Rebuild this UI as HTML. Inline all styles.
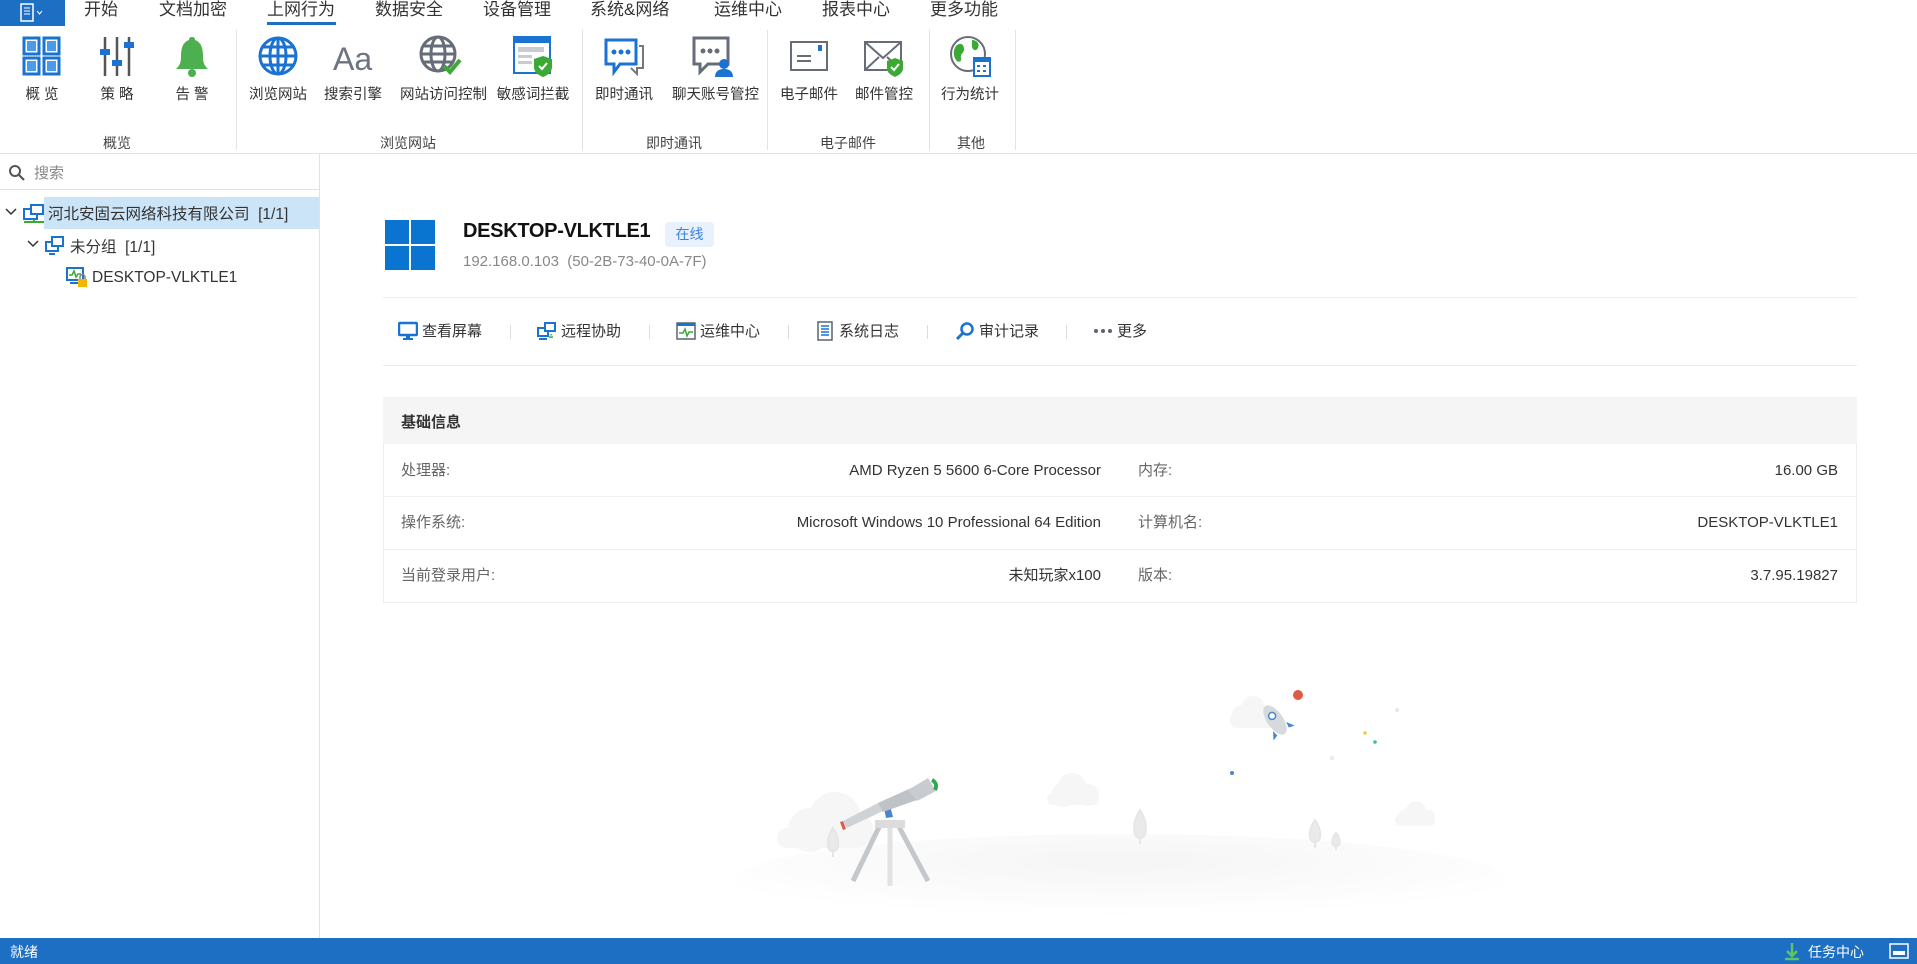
<!DOCTYPE html>
<html><head><meta charset="utf-8"><style>
*{margin:0;padding:0;box-sizing:border-box}
body{width:1917px;height:964px;overflow:hidden;background:#fff;font-family:"Liberation Sans","Noto Sans CJK SC",sans-serif;color:#333;position:relative}
.a{position:absolute}
.tab{position:absolute;top:0;height:26px;line-height:20px;font-size:17px;color:#333}
.ri{position:absolute;top:34px;width:80px;margin-left:-40px;text-align:center}
.ri svg{display:block;margin:0 auto;width:44px;height:44px}
.ri span{display:block;font-size:14.5px;color:#333;margin-top:5px;white-space:nowrap}
.gl{position:absolute;top:133px;font-size:14px;color:#444;transform:translateX(-50%)}
.sep{position:absolute;top:30px;width:1px;height:120px;background:#e3e3e3}
.act{position:absolute;top:320px;font-size:15px;color:#333;display:flex;align-items:center;gap:4px;white-space:nowrap}
.act svg{width:20px;height:20px}
.vs{position:absolute;top:325px;width:1px;height:14px;background:#ddd}
.lb{position:absolute;font-size:15px;line-height:20px;height:20px;color:#666}
.vl{position:absolute;font-size:15px;line-height:20px;height:20px;color:#333;text-align:right}
</style></head><body>
<div class="a" style="left:0;top:0;width:65px;height:26px;background:#1c6fc2"></div>
<svg class="a" style="left:20px;top:3px" width="26" height="20" viewBox="0 0 26 20"><rect x="1" y="1" width="12" height="17" fill="none" stroke="#fff" stroke-width="1.5"/><line x1="4" y1="5" x2="10" y2="5" stroke="#fff"/><line x1="4" y1="8" x2="10" y2="8" stroke="#fff"/><line x1="4" y1="11" x2="10" y2="11" stroke="#fff"/><path d="M17 8l2.5 3 2.5-3" stroke="#fff" fill="none"/></svg>
<div class="tab" style="left:84px">开始</div>
<div class="tab" style="left:159px">文档加密</div>
<div class="tab" style="left:267px">上网行为</div>
<div class="a" style="left:267px;top:22px;width:69px;height:3px;background:#1c6fc2"></div>
<div class="tab" style="left:375px">数据安全</div>
<div class="tab" style="left:483px">设备管理</div>
<div class="tab" style="left:590px">系统&amp;网络</div>
<div class="tab" style="left:714px">运维中心</div>
<div class="tab" style="left:822px">报表中心</div>
<div class="tab" style="left:930px">更多功能</div>

<div class="ri" style="left:42px"><svg viewBox="0 0 44 44"><g fill="#fff" stroke="#1a73d0" stroke-width="3"><rect x="4" y="4" width="15" height="16"/><rect x="24" y="4" width="15" height="16"/><rect x="4" y="24" width="15" height="16"/><rect x="24" y="24" width="15" height="16"/></g><g fill="#4a9be8"><rect x="7" y="7" width="9" height="10"/><rect x="27" y="7" width="9" height="10"/><rect x="7" y="27" width="9" height="10"/><rect x="27" y="27" width="9" height="10"/></g></svg><span>概 览</span></div>
<div class="ri" style="left:117px"><svg viewBox="0 0 44 44"><g stroke="#555" stroke-width="2.5"><line x1="10" y1="3" x2="10" y2="42"/><line x1="22" y1="3" x2="22" y2="42"/><line x1="34" y1="3" x2="34" y2="42"/></g><g fill="#1a73d0"><rect x="5" y="15" width="10" height="6"/><rect x="17" y="26" width="10" height="6"/><rect x="29" y="8" width="10" height="6"/></g></svg><span>策 略</span></div>
<div class="ri" style="left:192px"><svg viewBox="0 0 44 44"><path d="M22 3c2 0 3 1 3 3c6 2 8 8 8 16c0 8 2 10 5 13H6c3-3 5-5 5-13c0-8 2-14 8-16c0-2 1-3 3-3z" fill="#4caf50"/><circle cx="22" cy="39" r="4" fill="#4caf50"/></svg><span>告 警</span></div>
<div class="ri" style="left:278px"><svg viewBox="0 0 44 44"><g fill="none" stroke="#1a73d0" stroke-width="3"><circle cx="22" cy="22" r="18"/><ellipse cx="22" cy="22" rx="8" ry="18"/><line x1="4" y1="22" x2="40" y2="22"/><line x1="22" y1="4" x2="22" y2="40"/><path d="M7 13h30M7 31h30"/></g></svg><span>浏览网站</span></div>
<div class="ri" style="left:353px"><svg viewBox="0 0 44 44"><text x="2" y="36" font-size="32" fill="#6c7480" font-family="Liberation Sans">Aa</text></svg><span>搜索引擎</span></div>
<div class="ri" style="left:440px"><svg viewBox="0 0 44 44"><g fill="none" stroke="#666d78" stroke-width="3"><circle cx="20" cy="20" r="17"/><ellipse cx="20" cy="20" rx="7" ry="17"/><line x1="3" y1="20" x2="37" y2="20"/><path d="M6 12h28M6 28h28"/></g><path d="M26 32l6 6 10-12" stroke="#3aaa35" stroke-width="4" fill="none"/></svg><span>网站访问控制</span></div>
<div class="ri" style="left:533px"><svg viewBox="0 0 44 44"><rect x="3" y="3" width="36" height="36" fill="#fff" stroke="#1a73d0" stroke-width="2"/><rect x="3" y="3" width="36" height="6" fill="#1a73d0"/><g fill="#c8ccd2"><rect x="7" y="13" width="26" height="5"/><rect x="7" y="21" width="14" height="3"/><rect x="7" y="27" width="14" height="3"/></g><path d="M32 22l9 3v8c0 5-4 8-9 10c-5-2-9-5-9-10v-8z" fill="#3aaa35"/><path d="M28 32l3 3 5-6" stroke="#fff" stroke-width="2" fill="none"/></svg><span>敏感词拦截</span></div>
<div class="ri" style="left:624px"><svg viewBox="0 0 44 44"><path d="M4 6h30v24H18l-6 8v-8H4z" fill="#fff" stroke="#1a73d0" stroke-width="3"/><path d="M37 12h4v22h-6v6l-6-6" fill="none" stroke="#777" stroke-width="2"/><g fill="#1a73d0"><circle cx="12" cy="18" r="2.5"/><circle cx="19" cy="18" r="2.5"/><circle cx="26" cy="18" r="2.5"/></g></svg><span>即时通讯</span></div>
<div class="ri" style="left:712px"><svg viewBox="0 0 44 44"><path d="M4 4h34v26H18l-8 8v-8H4z" fill="#fff" stroke="#666d78" stroke-width="3"/><g fill="#666d78"><circle cx="13" cy="17" r="2.5"/><circle cx="20" cy="17" r="2.5"/><circle cx="27" cy="17" r="2.5"/></g><circle cx="34" cy="30" r="5" fill="#1a73d0"/><path d="M25 43c0-6 4-8 9-8s9 2 9 8z" fill="#1a73d0"/></svg><span>聊天账号管控</span></div>
<div class="ri" style="left:809px"><svg viewBox="0 0 44 44"><rect x="4" y="8" width="36" height="28" fill="#fff" stroke="#666d78" stroke-width="2"/><line x1="10" y1="22" x2="24" y2="22" stroke="#666d78" stroke-width="2"/><line x1="10" y1="27" x2="24" y2="27" stroke="#666d78" stroke-width="2"/><rect x="31" y="11" width="4" height="6" fill="#1a73d0"/></svg><span>电子邮件</span></div>
<div class="ri" style="left:884px"><svg viewBox="0 0 44 44"><rect x="3" y="8" width="36" height="28" fill="#fff" stroke="#666d78" stroke-width="2"/><path d="M3 8l18 16 18-16M3 36l14-13M39 36l-14-13" fill="none" stroke="#666d78" stroke-width="2"/><path d="M33 24l8 3v7c0 5-4 7-8 9c-4-2-8-4-8-9v-7z" fill="#3aaa35"/><path d="M29 33l3 3 5-6" stroke="#fff" stroke-width="2" fill="none"/></svg><span>邮件管控</span></div>
<div class="ri" style="left:970px"><svg viewBox="0 0 44 44"><circle cx="20" cy="20" r="17" fill="#fff" stroke="#666d78" stroke-width="2"/><path d="M8 12c4-4 8-2 8 3s-4 4-3 9c1 4-3 5-5 2c-3-4-3-10 0-14zM24 6c5 0 8 4 6 8s-6 2-6-2z" fill="#3aaa35"/><rect x="26" y="24" width="16" height="18" fill="#fff" stroke="#1a73d0" stroke-width="2"/><rect x="26" y="24" width="16" height="4" fill="#1a73d0"/><g fill="#1a73d0"><rect x="29" y="31" width="3" height="2"/><rect x="35" y="31" width="3" height="2"/><rect x="29" y="36" width="3" height="2"/><rect x="35" y="36" width="3" height="2"/></g></svg><span>行为统计</span></div>
<div class="sep" style="left:236px"></div><div class="sep" style="left:582px"></div><div class="sep" style="left:767px"></div><div class="sep" style="left:929px"></div><div class="sep" style="left:1015px"></div>
<div class="gl" style="left:117px">概览</div>
<div class="gl" style="left:408px">浏览网站</div>
<div class="gl" style="left:674px">即时通讯</div>
<div class="gl" style="left:848px">电子邮件</div>
<div class="gl" style="left:971px">其他</div>
<div class="a" style="left:0;top:153px;width:1917px;height:1px;background:#e2e2e2"></div>

<div class="a" style="left:319px;top:154px;width:1px;height:784px;background:#e2e2e2"></div>
<svg class="a" style="left:8px;top:164px" width="18" height="18" viewBox="0 0 18 18"><circle cx="7" cy="7" r="5" fill="none" stroke="#555" stroke-width="2"/><line x1="11" y1="11" x2="16" y2="16" stroke="#555" stroke-width="2.2"/></svg>
<div class="a" style="left:34px;top:162px;font-size:15px;color:#888">搜索</div>
<div class="a" style="left:0;top:189px;width:319px;height:1px;background:#e2e2e2"></div>
<div class="a" style="left:44px;top:197px;width:275px;height:32px;background:#cce4f7"></div>
<svg class="a" style="left:5px;top:207px" width="12" height="10"><path d="M1 2l5 5 5-5" stroke="#333" stroke-width="1.5" fill="none"/></svg>
<svg class="a" style="left:22px;top:203px" width="24" height="22" viewBox="0 0 24 22"><rect x="2" y="6" width="13" height="10" fill="#fff" stroke="#1a73d0" stroke-width="2"/><rect x="9" y="2" width="12" height="9" fill="#fff" stroke="#1a73d0" stroke-width="2"/><path d="M2 19h20M12 16v3" stroke="#3aaa35" stroke-width="2"/></svg>
<div class="a" style="left:48px;top:202px;font-size:15.5px;color:#333">河北安固云网络科技有限公司&nbsp;&nbsp;[1/1]</div>
<svg class="a" style="left:27px;top:239px" width="12" height="10"><path d="M1 2l5 5 5-5" stroke="#333" stroke-width="1.5" fill="none"/></svg>
<svg class="a" style="left:44px;top:234px" width="22" height="22" viewBox="0 0 22 22"><rect x="2" y="8" width="12" height="9" fill="#fff" stroke="#1a73d0" stroke-width="2"/><rect x="8" y="3" width="11" height="9" fill="#fff" stroke="#1a73d0" stroke-width="2"/><path d="M5 20h6" stroke="#1a73d0" stroke-width="2"/></svg>
<div class="a" style="left:70px;top:235px;font-size:15.5px;color:#333">未分组&nbsp;&nbsp;[1/1]</div>
<svg class="a" style="left:66px;top:266px" width="22" height="22" viewBox="0 0 22 22"><rect x="1" y="2" width="16" height="12" fill="#fff" stroke="#1a73d0" stroke-width="2"/><path d="M3 9h3l2-4 2 6 2-3h3" stroke="#3aaa35" fill="none" stroke-width="1.5"/><rect x="4" y="16" width="10" height="2" fill="#1a73d0"/><rect x="12" y="13" width="9" height="8" fill="#f2b600"/><path d="M14 13v-2a2.5 2.5 0 015 0v2" stroke="#888" fill="none" stroke-width="1.5"/></svg>
<div class="a" style="left:92px;top:269px;font-size:15.5px;color:#333">DESKTOP-VLKTLE1</div>

<svg class="a" style="left:385px;top:220px" width="50" height="50" viewBox="0 0 50 50"><g fill="#0a74d1"><rect x="0" y="0" width="24" height="24"/><rect x="26" y="0" width="24" height="24"/><rect x="0" y="26" width="24" height="24"/><rect x="26" y="26" width="24" height="24"/></g></svg>
<div class="a" style="left:463px;top:220px;font-size:20px;font-weight:bold;color:#111;letter-spacing:-0.3px">DESKTOP-VLKTLE1</div>
<div class="a" style="left:665px;top:222px;width:49px;height:25px;background:#e8f1fc;border-radius:4px;color:#3b82e0;font-size:14px;text-align:center;line-height:25px">在线</div>
<div class="a" style="left:463px;top:253px;font-size:15px;color:#888">192.168.0.103&nbsp;&nbsp;(50-2B-73-40-0A-7F)</div>
<div class="a" style="left:383px;top:297px;width:1474px;height:1px;background:#ebebeb"></div>

<div class="act" style="left:398px"><svg viewBox="0 0 20 20"><rect x="1" y="2" width="18" height="12" rx="1" fill="none" stroke="#1a73d0" stroke-width="2.5"/><rect x="8" y="14" width="4" height="3" fill="#1a73d0"/><rect x="5" y="17" width="10" height="2" fill="#1a73d0"/></svg>查看屏幕</div>
<div class="vs" style="left:510px"></div>
<div class="act" style="left:537px"><svg viewBox="0 0 20 20"><rect x="1" y="7" width="10" height="8" fill="none" stroke="#1a73d0" stroke-width="2"/><rect x="8" y="2" width="10" height="8" fill="#fff" stroke="#1a73d0" stroke-width="2"/><path d="M2 18h8" stroke="#1a73d0" stroke-width="2"/><path d="M14 13v5M12 16h5" stroke="#3aaa35" stroke-width="1.5" stroke-dasharray="1.5 1"/></svg>远程协助</div>
<div class="vs" style="left:649px"></div>
<div class="act" style="left:676px"><svg viewBox="0 0 20 20"><rect x="1" y="2" width="18" height="16" fill="#fff" stroke="#5a6370" stroke-width="1.5"/><rect x="1" y="2" width="18" height="3" fill="#1a73d0"/><path d="M3 12h4l2-4 2 7 2-4h4" stroke="#3aaa35" fill="none" stroke-width="1.5"/></svg>运维中心</div>
<div class="vs" style="left:788px"></div>
<div class="act" style="left:815px"><svg viewBox="0 0 20 20"><rect x="3" y="1" width="14" height="18" fill="#fff" stroke="#5a6370" stroke-width="1.5"/><g stroke="#1a73d0" stroke-width="1.5"><line x1="6" y1="5" x2="14" y2="5"/><line x1="6" y1="8" x2="14" y2="8"/><line x1="6" y1="11" x2="14" y2="11"/><line x1="6" y1="14" x2="14" y2="14"/></g></svg>系统日志</div>
<div class="vs" style="left:927px"></div>
<div class="act" style="left:955px"><svg viewBox="0 0 20 20"><circle cx="12" cy="8" r="5.5" fill="none" stroke="#1a73d0" stroke-width="2.5"/><line x1="8" y1="12" x2="2" y2="18" stroke="#1a73d0" stroke-width="3"/></svg>审计记录</div>
<div class="vs" style="left:1066px"></div>
<div class="act" style="left:1093px"><svg viewBox="0 0 20 20" style="width:20px"><g fill="#5a6370"><circle cx="3" cy="10" r="2"/><circle cx="10" cy="10" r="2"/><circle cx="17" cy="10" r="2"/></g></svg>更多</div>
<div class="a" style="left:383px;top:365px;width:1474px;height:1px;background:#ebebeb"></div>

<div class="a" style="left:383px;top:397px;width:1474px;height:206px;border:1px solid #eee"></div>
<div class="a" style="left:383px;top:397px;width:1474px;height:47px;background:#f5f5f5"></div>
<div class="a" style="left:401px;top:411px;font-size:15px;font-weight:bold;color:#333">基础信息</div>
<div class="a" style="left:384px;top:496px;width:1472px;height:1px;background:#f0f0f0"></div>
<div class="a" style="left:384px;top:549px;width:1472px;height:1px;background:#f0f0f0"></div>
<div class="lb" style="left:401px;top:461px">处理器:</div>
<div class="vl" style="right:816px;top:461px">AMD Ryzen 5 5600 6-Core Processor</div>
<div class="lb" style="left:1138px;top:461px">内存:</div>
<div class="vl" style="right:79px;top:461px">16.00 GB</div>
<div class="lb" style="left:401px;top:513px">操作系统:</div>
<div class="vl" style="right:816px;top:513px">Microsoft Windows 10 Professional 64 Edition</div>
<div class="lb" style="left:1138px;top:513px">计算机名:</div>
<div class="vl" style="right:79px;top:513px">DESKTOP-VLKTLE1</div>
<div class="lb" style="left:401px;top:566px">当前登录用户:</div>
<div class="vl" style="right:816px;top:566px">未知玩家x100</div>
<div class="lb" style="left:1138px;top:566px">版本:</div>
<div class="vl" style="right:79px;top:566px">3.7.95.19827</div>

<svg class="a" style="left:0;top:0" width="1917" height="938" viewBox="0 0 1917 938">
<defs><radialGradient id="g" cx="50%" cy="30%" r="60%"><stop offset="0" stop-color="#f5f5f5"/><stop offset="1" stop-color="#fff"/></radialGradient></defs>
<ellipse cx="1120" cy="880" rx="385" ry="46" fill="url(#g)"/>
<g fill="#f6f6f6"><circle cx="810" cy="830" r="22"/><circle cx="835" cy="818" r="26"/><circle cx="855" cy="830" r="18"/><rect x="777" y="828" width="90" height="20" rx="10"/>
<circle cx="1063" cy="795" r="12"/><circle cx="1072" cy="787" r="14"/><circle cx="1088" cy="795" r="11"/><rect x="1047" y="793" width="52" height="12" rx="6"/>
<circle cx="1242" cy="715" r="10"/><circle cx="1253" cy="708" r="12"/><rect x="1230" y="713" width="45" height="15" rx="7"/>
<circle cx="1406" cy="817" r="8"/><circle cx="1416" cy="811" r="10"/><circle cx="1428" cy="817" r="7"/><rect x="1395" y="815" width="40" height="11" rx="5"/></g>
<g fill="#eaeaea" stroke="#e6e6e6" stroke-width="2"><path d="M1140 810c-8 12-8 28 0 28c8 0 8-16 0-28z"/><line x1="1140" y1="836" x2="1140" y2="844"/><path d="M833 828c-7 10-7 23 0 23c7 0 7-13 0-23z"/><line x1="833" y1="849" x2="833" y2="857"/><path d="M1315 820c-7 10-7 22 0 22c7 0 7-12 0-22z"/><line x1="1315" y1="840" x2="1315" y2="848"/><path d="M1336 833c-5 6-5 13 0 13c5 0 5-7 0-13z"/><line x1="1336" y1="845" x2="1336" y2="850"/></g>
<g stroke="#c4c7cb" stroke-width="5"><line x1="880" y1="825" x2="853" y2="881"/><line x1="898" y1="825" x2="928" y2="881"/></g>
<line x1="890" y1="825" x2="890" y2="886" stroke="#e2e2e2" stroke-width="5"/>
<rect x="875" y="820" width="30" height="8" fill="#dcdcdc"/>
<path d="M886 818l-2-10 6-2 3 11z" fill="#4a86d0"/>
<path d="M843 821l35-18 5 8-36 17z" fill="#d0d3d6"/><path d="M878 803l33-15 6 12-34 12z" fill="#bfc3c7"/><path d="M908 790l20-12 8 13-19 10z" fill="#c8cbcf"/>
<path d="M843 821l3 8-3 1-3-8z" fill="#e05a44"/><path d="M932 780c4 2 5 6 3 10" stroke="#2eaa4e" stroke-width="4" fill="none"/>
<g transform="translate(1275 720) rotate(-35)"><ellipse cx="0" cy="0" rx="8" ry="17" fill="#d7dadd"/><circle cx="0" cy="-5" r="3.5" fill="#fff" stroke="#4a86d0" stroke-width="1.5"/><path d="M-8 8l-5 8 6-2zM8 8l5 8-6-2z" fill="#4a86d0"/></g>
<circle cx="1298" cy="695" r="5" fill="#e05a44"/>
<circle cx="1397" cy="710" r="2" fill="#e8e8e8"/><circle cx="1365" cy="733" r="1.8" fill="#f5c842"/><circle cx="1375" cy="742" r="1.8" fill="#3cbf8a"/><circle cx="1332" cy="758" r="2.5" fill="#eeeeee"/><circle cx="1232" cy="773" r="2" fill="#4a86d0"/>
</svg>

<div class="a" style="left:0;top:938px;width:1917px;height:26px;background:#1c6fc2"></div>
<div class="a" style="left:10px;top:942px;font-size:14px;color:#fff">就绪</div>
<svg class="a" style="left:1782px;top:941px" width="20" height="20" viewBox="0 0 20 20"><path d="M10 2v13M5 10l5 5 5-5M3 18h14" stroke="#5ec46a" stroke-width="2.5" fill="none"/></svg>
<div class="a" style="left:1808px;top:942px;font-size:14px;color:#fff">任务中心</div>
<svg class="a" style="left:1889px;top:943px" width="20" height="16" viewBox="0 0 20 16"><rect x="1" y="1" width="18" height="14" fill="none" stroke="#fff" stroke-width="1.5"/><rect x="4" y="8" width="12" height="4" fill="#fff"/></svg>
</body></html>
